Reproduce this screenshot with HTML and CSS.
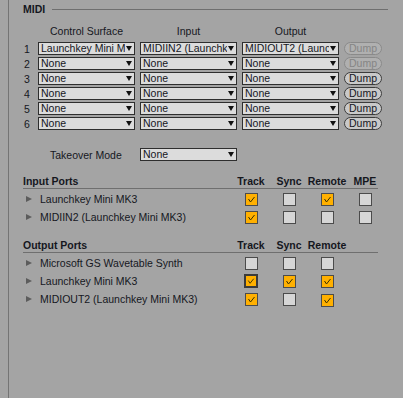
FILE: index.html
```html
<!DOCTYPE html>
<html lang="en">
<head>
    <meta charset="UTF-8">
    <meta name="viewport" content="width=device-width, initial-scale=1.0">
    <title>MIDI Preferences</title>
    <link rel="stylesheet" href="styles.css">
</head>
<body>
    <div class="panel">
        <div class="section-title">MIDI</div>

        <div class="surfaces">
            <div class="surface-row head">
                <span></span>
                <span>Control Surface</span>
                <span>Input</span>
                <span>Output</span>
                <span></span>
            </div>
            <div class="surface-row">
                <span class="num">1</span>
                <div class="select"><span>Launchkey Mini MK3</span></div>
                <div class="select"><span>MIDIIN2 (Launchkey Mini MK3)</span></div>
                <div class="select"><span>MIDIOUT2 (Launchkey Mini MK3)</span></div>
                <span class="dump off">Dump</span>
            </div>
            <div class="surface-row">
                <span class="num">2</span>
                <div class="select"><span>None</span></div>
                <div class="select"><span>None</span></div>
                <div class="select"><span>None</span></div>
                <span class="dump off">Dump</span>
            </div>
            <div class="surface-row">
                <span class="num">3</span>
                <div class="select"><span>None</span></div>
                <div class="select"><span>None</span></div>
                <div class="select"><span>None</span></div>
                <span class="dump">Dump</span>
            </div>
            <div class="surface-row">
                <span class="num">4</span>
                <div class="select"><span>None</span></div>
                <div class="select"><span>None</span></div>
                <div class="select"><span>None</span></div>
                <span class="dump">Dump</span>
            </div>
            <div class="surface-row">
                <span class="num">5</span>
                <div class="select"><span>None</span></div>
                <div class="select"><span>None</span></div>
                <div class="select"><span>None</span></div>
                <span class="dump">Dump</span>
            </div>
            <div class="surface-row">
                <span class="num">6</span>
                <div class="select"><span>None</span></div>
                <div class="select"><span>None</span></div>
                <div class="select"><span>None</span></div>
                <span class="dump">Dump</span>
            </div>
            <div class="surface-row takeover">
                <span class="takeover-label">Takeover Mode</span>
                <div class="select"><span>None</span></div>
            </div>
        </div>

        <!-- Input ports -->
        <div class="ports-head first">
            <span>Input Ports</span>
            <span class="cell">Track</span>
            <span class="cell">Sync</span>
            <span class="cell">Remote</span>
            <span class="cell mpe">MPE</span>
        </div>
        <div class="ports">
            <div class="port-row">
                <span class="port-name">Launchkey Mini MK3</span>
                <span class="cell"><span class="check on"><svg viewBox="0 0 11 11"><polyline points="2.5,5 4.5,8 8.5,3"/></svg></span></span>
                <span class="cell"><span class="check"></span></span>
                <span class="cell"><span class="check on"><svg viewBox="0 0 11 11"><polyline points="2.5,5 4.5,8 8.5,3"/></svg></span></span>
                <span class="cell mpe"><span class="check"></span></span>
            </div>
            <div class="port-row">
                <span class="port-name">MIDIIN2 (Launchkey Mini MK3)</span>
                <span class="cell"><span class="check on"><svg viewBox="0 0 11 11"><polyline points="2.5,5 4.5,8 8.5,3"/></svg></span></span>
                <span class="cell"><span class="check"></span></span>
                <span class="cell"><span class="check"></span></span>
                <span class="cell mpe"><span class="check"></span></span>
            </div>
        </div>

        <!-- Output ports -->
        <div class="ports-head">
            <span>Output Ports</span>
            <span class="cell">Track</span>
            <span class="cell">Sync</span>
            <span class="cell">Remote</span>
            <span></span>
        </div>
        <div class="ports">
            <div class="port-row">
                <span class="port-name">Microsoft GS Wavetable Synth</span>
                <span class="cell"><span class="check"></span></span>
                <span class="cell"><span class="check"></span></span>
                <span class="cell"><span class="check"></span></span>
            </div>
            <div class="port-row">
                <span class="port-name">Launchkey Mini MK3</span>
                <span class="cell"><span class="check on focus"><svg viewBox="0 0 11 11"><polyline points="2.5,5 4.5,8 8.5,3"/></svg></span></span>
                <span class="cell"><span class="check on"><svg viewBox="0 0 11 11"><polyline points="2.5,5 4.5,8 8.5,3"/></svg></span></span>
                <span class="cell"><span class="check on"><svg viewBox="0 0 11 11"><polyline points="2.5,5 4.5,8 8.5,3"/></svg></span></span>
            </div>
            <div class="port-row">
                <span class="port-name">MIDIOUT2 (Launchkey Mini MK3)</span>
                <span class="cell"><span class="check on"><svg viewBox="0 0 11 11"><polyline points="2.5,5 4.5,8 8.5,3"/></svg></span></span>
                <span class="cell"><span class="check"></span></span>
                <span class="cell"><span class="check on low"><svg viewBox="0 0 11 11"><polyline points="2.5,5 4.5,8 8.5,3"/></svg></span></span>
            </div>
        </div>
    </div>
</body>
</html>
```

FILE: styles.css
```css
body {
    margin: 0;
    background-color: #a4a4a4;
    color: #15171e;
    font-family: "Liberation Sans", Arial, sans-serif;
    font-size: 10.5px;
}

.panel {
    margin-left: 8px;
    border-left: 1px solid #747474;
    min-height: 100vh;
    padding-left: 14px;
    box-sizing: border-box;
}

/* Section title with rule */
.section-title {
    display: flex;
    align-items: center;
    width: 365px;
    height: 18px;
    font-weight: bold;
}

.section-title::after {
    content: "";
    flex: 1;
    height: 1px;
    margin-left: 7px;
    background-color: #6f6f6f;
}

/* Control surfaces */
.surface-row {
    display: grid;
    grid-template-columns: 10px 97px 97px 97px 38px;
    column-gap: 5px;
    align-items: center;
    height: 13px;
    margin-top: 2px;
}

.surface-row.head {
    margin-top: 7px;
    text-align: center;
    line-height: 13px;
}

.head + .surface-row {
    margin-top: 4px;
}

.surface-row.takeover {
    margin-top: 18px;
}

.num {
    padding-left: 1px;
}

.takeover-label {
    grid-column: 1 / span 2;
    padding-left: 27px;
}

.select {
    display: flex;
    align-items: center;
    height: 13px;
    box-sizing: border-box;
    padding: 0 2px;
    border: 1px solid #2e2e2e;
    background-color: #dcdcdc;
    overflow: hidden;
}

.select span {
    flex: 1;
    min-width: 0;
    overflow: hidden;
    white-space: nowrap;
    line-height: 11px;
}

.select::after {
    content: "";
    flex: none;
    margin-left: 1px;
    border-left: 3px solid transparent;
    border-right: 3px solid transparent;
    border-top: 5px solid #111;
}

.dump {
    display: block;
    height: 13px;
    box-sizing: border-box;
    border: 1px solid #3c3c3c;
    border-radius: 7px;
    background-color: #c9c9c9;
    text-align: center;
    line-height: 11px;
}

.dump.off {
    border-color: #8a8a8a;
    background-color: #b0b0b0;
    color: #858585;
}

/* Ports tables */
.ports-head,
.port-row {
    display: grid;
    grid-template-columns: 209px 38px 38px 38px 32px;
    align-items: center;
}

.ports-head {
    width: 355px;
    height: 15px;
    margin-top: 11px;
    border-bottom: 1px solid #6f6f6f;
    font-weight: bold;
}

.ports-head.first {
    margin-top: 12px;
}

.ports {
    padding-top: 1px;
}

.port-row {
    height: 18px;
}

.cell {
    display: flex;
    justify-content: center;
}

.cell.mpe {
    padding-left: 6px;
}

.port-name {
    display: flex;
    align-items: center;
    white-space: nowrap;
}

.port-name::before {
    content: "";
    margin: 0 8px 0 3px;
    border-top: 3.5px solid transparent;
    border-bottom: 3.5px solid transparent;
    border-left: 6px solid #5c5c5c;
}

.check {
    display: block;
    width: 13px;
    height: 13px;
    box-sizing: border-box;
    border: 1px solid #4b4b4b;
    background-color: #d6d6d6;
}

.check.on {
    background-color: #ffb000;
}

.check.focus {
    width: 14px;
    height: 14px;
    border: 2px solid #3b3b3b;
}

.check.low {
    margin-top: 2px;
}

.check svg {
    display: block;
    width: 100%;
    height: 100%;
    fill: none;
    stroke: #3a3000;
    stroke-width: 1;
}
```
